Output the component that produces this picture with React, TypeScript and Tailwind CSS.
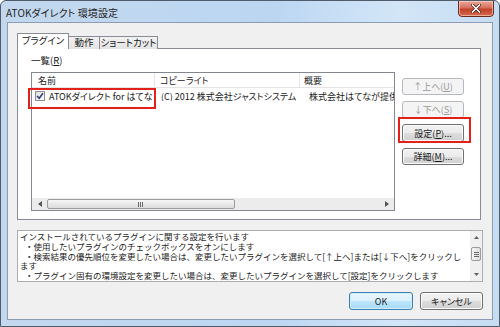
import React from "react";

const font = "font-['Noto_Sans_CJK_JP','Noto_Sans',sans-serif] [font-feature-settings:'palt']";

function WinButton({
  children,
  disabled,
  className = "",
}: {
  children: React.ReactNode;
  disabled?: boolean;
  className?: string;
}) {
  return (
    <div
      className={
        "flex items-center justify-center rounded-[3px] border text-[9px] leading-none " +
        (disabled
          ? "border-[#b5b9bd] bg-[#f4f4f4] text-[#9a9a9a] "
          : "border-[#707070] bg-[linear-gradient(#f3f3f3_0%,#ebebeb_50%,#dddddd_51%,#d0d0d0_100%)] text-[#1a1a1a] shadow-[inset_0_0_0_1px_#fcfcfc] ") +
        className
      }
    >
      {children}
    </div>
  );
}

export default function App() {
  return (
    <div
      className={`${font} relative flex h-[327px] w-[500px] flex-col overflow-hidden rounded-t-[6px] border border-[#4f5c6c] bg-[linear-gradient(90deg,#c3d8ee_0%,#bcd6f2_55%,#d3e6f8_80%,#c6dcf2_100%)]`}
    >
      {/* Title bar */}
      <div className="flex h-[21px] shrink-0 items-center pl-[5px] pt-[1px]">
        <span className="text-[10px] tracking-[0.1px] text-[#1e1e1e]">ATOKダイレクト 環境設定</span>
      </div>
      <div className="absolute right-[5px] top-[-1px] flex h-[17px] w-[36px] items-center justify-center rounded-b-[4px] border border-[#6b2a22] bg-[linear-gradient(#e9a99c_0%,#d7705e_45%,#c2412c_55%,#d56a4a_100%)] shadow-[inset_0_0_0_1px_rgba(255,220,210,0.6)]">
        <svg width="10" height="9" viewBox="0 0 10 9">
          <path d="M1.5 1 L8.5 8 M8.5 1 L1.5 8" stroke="#3a1510" strokeWidth="3" strokeLinecap="square" />
          <path d="M1.5 1 L8.5 8 M8.5 1 L1.5 8" stroke="#ffffff" strokeWidth="1.6" strokeLinecap="square" />
        </svg>
      </div>

      {/* Client area */}
      <div className="mx-[6px] mb-[6px] flex flex-1 flex-col border border-[#8b9cb3] bg-[#f0f0f0] pl-[9px] pt-[10px]">
        {/* Tabs */}
        <div className="relative z-10 flex h-[16px] items-end text-[9.5px] leading-none text-[#1a1a1a]">
          <div className="flex h-[16px] w-[52px] items-center justify-center border border-b-0 border-[#898c95] bg-white pb-[1px]">
            プラグイン
          </div>
          <div className="flex h-[13px] w-[31px] items-center justify-center border border-b-0 border-l-0 border-[#898c95] bg-[linear-gradient(#f2f2f2,#e3e3e3)]">
            動作
          </div>
          <div className="flex h-[13px] w-[58px] items-center justify-center border border-b-0 border-l-0 border-[#898c95] bg-[linear-gradient(#f2f2f2,#e3e3e3)]">
            ショートカット
          </div>
        </div>
        {/* Panel */}
        <div className="-mt-px flex h-[172px] w-[464px] border border-[#898c95] bg-white pl-[13px] pt-[6px]">
          <div className="flex flex-col">
            <div className="h-[17px] text-[9.5px] leading-[11px] text-[#1a1a1a]">
              一覧(<span className="underline">R</span>)
            </div>
            <div className="flex h-[139px] w-[364px] flex-col border border-[#828790] bg-white text-[9px] leading-none text-[#1a1a1a]">
              {/* Header */}
              <div className="flex h-[15px] shrink-0 items-center border-b border-[#e5e5e5]">
                <div className="flex h-full w-[123px] items-center border-r border-[#e5e5e5] pl-[6px]">名前</div>
                <div className="flex h-full w-[145px] items-center border-r border-[#e5e5e5] pl-[5px]">コピーライト</div>
                <div className="flex h-full flex-1 items-center pl-[4px]">概要</div>
              </div>
              {/* Row */}
              <div className="flex h-[16px] shrink-0 items-center whitespace-nowrap">
                <div className="flex w-[123px] items-center overflow-hidden pl-[3px]">
                  <div className="mr-[4px] flex h-[10px] w-[10px] shrink-0 items-center justify-center border border-[#8f8f8f] bg-[linear-gradient(135deg,#e0e0e0,#fdfdfd)]">
                    <svg width="8" height="8" viewBox="0 0 8 8">
                      <path d="M1 4 L3.2 6.3 L7 1.2" fill="none" stroke="#2a3d7a" strokeWidth="1.5" />
                    </svg>
                  </div>
                  <span>ATOKダイレクト for はてな</span>
                </div>
                <div className="w-[145px] overflow-hidden pl-[6px]">(C) 2012 株式会社ジャストシステム</div>
                <div className="flex-1 overflow-hidden pl-[9px]">株式会社はてなが提供する</div>
              </div>
              <div className="flex-1" />
              {/* Horizontal scrollbar */}
              <div className="flex h-[12px] shrink-0 items-center bg-[#ececec]">
                <div className="flex w-[15px] items-center justify-center">
                  <svg width="4" height="6" viewBox="0 0 4 6">
                    <path d="M4 0 L0 3 L4 6 Z" fill="#555" />
                  </svg>
                </div>
                <div className="flex h-[10px] w-[188px] items-center justify-center rounded-[2px] border border-[#9c9c9c] bg-[linear-gradient(#f6f6f6,#dcdcdc)]">
                  <svg width="6" height="5" viewBox="0 0 6 5">
                    <path d="M0.5 0 V5 M2.5 0 V5 M4.5 0 V5" stroke="#6a6a6a" strokeWidth="1" />
                  </svg>
                </div>
                <div className="flex-1" />
                <div className="flex w-[14px] items-center justify-center">
                  <svg width="4" height="6" viewBox="0 0 4 6">
                    <path d="M0 0 L4 3 L0 6 Z" fill="#555" />
                  </svg>
                </div>
              </div>
            </div>
          </div>
          {/* Right buttons */}
          <div className="ml-[7px] mt-[23px] flex flex-col gap-[6px]">
            <WinButton disabled className="h-[17px] w-[62px]">
              ↑上へ(<span className="underline">U</span>)
            </WinButton>
            <WinButton disabled className="h-[17px] w-[62px]">
              ↓下へ(<span className="underline">S</span>)
            </WinButton>
            <WinButton className="h-[18px] w-[62px]">
              設定(<span className="underline">P</span>)...
            </WinButton>
            <WinButton className="h-[17px] w-[62px]">
              詳細(<span className="underline">M</span>)...
            </WinButton>
          </div>
        </div>

        {/* Description box */}
        <div className="mt-[10px] flex h-[52px] w-[466px] border border-[#abadb3] bg-white">
          <div className="flex flex-1 flex-col overflow-hidden whitespace-nowrap pl-[2px] pt-[1px] text-[8.5px] leading-[9.8px] text-[#1a1a1a] [font-feature-settings:normal]">
            <div>インストールされているプラグインに関する設定を行います</div>
            <div className="pl-[5px]">・使用したいプラグインのチェックボックスをオンにします</div>
            <div className="pl-[5px]">・検索結果の優先順位を変更したい場合は、変更したいプラグインを選択して[↑上へ]または[↓下へ]をクリックし</div>
            <div>ます</div>
            <div className="pl-[5px]">・プラグイン固有の環境設定を変更したい場合は、変更したいプラグインを選択して[設定]をクリックします</div>
          </div>
          <div className="flex w-[12px] flex-col items-center bg-[#f0f0f0]">
            <div className="flex h-[11px] items-center justify-center pt-[2px]">
              <svg width="5" height="3" viewBox="0 0 5 3">
                <path d="M0 3 L2.5 0 L5 3 Z" fill="#606060" />
              </svg>
            </div>
            <div className="mt-[5px] flex h-[14px] w-[10px] items-center justify-center rounded-[2px] border border-[#9c9c9c] bg-[linear-gradient(90deg,#f6f6f6,#dcdcdc)]">
              <svg width="5" height="5" viewBox="0 0 5 5">
                <path d="M0 0.5 H5 M0 2.5 H5 M0 4.5 H5" stroke="#6a6a6a" strokeWidth="1" />
              </svg>
            </div>
            <div className="flex-1" />
            <div className="flex h-[11px] items-center justify-center pb-[2px]">
              <svg width="5" height="3" viewBox="0 0 5 3">
                <path d="M0 0 L2.5 3 L5 0 Z" fill="#606060" />
              </svg>
            </div>
          </div>
        </div>

        {/* Bottom buttons */}
        <div className="mt-[10px] flex w-[466px] justify-end gap-[7px]">
          <div className="flex h-[18px] w-[64px] items-center justify-center rounded-[3px] border border-[#3c7fb1] bg-[linear-gradient(#eaf6fd_0%,#d9f0fc_50%,#bee6fd_51%,#a7d9f5_100%)] text-[9px] leading-none text-[#1a1a1a] shadow-[inset_0_0_0_1px_#cfeefc]">
            OK
          </div>
          <WinButton className="h-[18px] w-[63px]">キャンセル</WinButton>
        </div>
      </div>

      {/* Red highlight boxes */}
      <div className="absolute left-[27px] top-[87px] h-[21px] w-[128px] border-2 border-[#e3211c]" />
      <div className="absolute left-[397px] top-[116px] h-[26px] w-[73px] border-2 border-[#e3211c]" />
    </div>
  );
}
